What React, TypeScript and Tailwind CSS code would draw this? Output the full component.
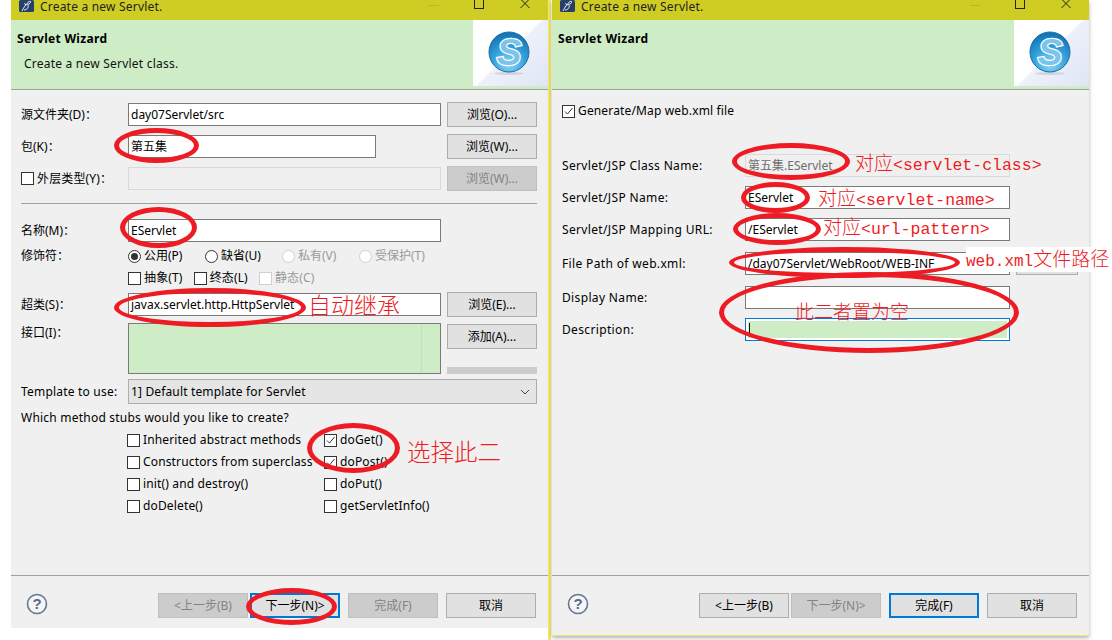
import type { ReactNode } from 'react';

const font = { fontFamily: '"Noto Sans", "Noto Sans CJK SC", sans-serif' };

function Logo() {
  return (
    <div className="w-[75px] h-[66px] bg-[linear-gradient(135deg,#ffffff_48%,#eef1fa_50%,#dfe5f5_100%)] flex items-center justify-start pl-[15px]">
      <svg width="42" height="46" viewBox="0 0 42 46">
        <defs>
          <radialGradient id="ball" cx="50%" cy="80%" r="80%">
            <stop offset="0%" stopColor="#8fd8f5" />
            <stop offset="50%" stopColor="#35a3dc" />
            <stop offset="100%" stopColor="#0f6fb0" />
          </radialGradient>
        </defs>
        <ellipse cx="21" cy="43.5" rx="15" ry="1.5" fill="#cfd3da" />
        <circle cx="21" cy="22" r="20" fill="url(#ball)" stroke="#1a6fa8" />
        <text x="21" y="35" textAnchor="middle" fontSize="37" fontWeight="700" fontStyle="italic" fill="#7cc4ec" stroke="#ffffff" strokeWidth="2.5" paintOrder="stroke" fontFamily="Liberation Sans, sans-serif">S</text>
      </svg>
    </div>
  );
}

function TitleBar() {
  return (
    <div className="h-[20px] bg-[#cfcd24] flex items-start overflow-hidden shrink-0">
      <svg width="15" height="12" viewBox="0 0 15 12" className="ml-[8px] shrink-0">
        <rect width="15" height="12" rx="1.5" fill="#27406b" />
        <path d="M3 11C5 7 7 4 10 1.5C12 0.5 12.5 2.5 10 4C7 5.5 5 4.5 6 3M9 5C10 7 8 10 5 10" fill="none" stroke="#fff" strokeWidth="0.9" />
      </svg>
      <span className="ml-[6px] -mt-px text-[12px] leading-[16px] tracking-[0.2px] text-[#222]">Create a new Servlet.</span>
      <div className="ml-auto mr-[18px] flex items-start">
        <div className="w-[10px] h-px mt-[5px] bg-[#b5b33a]" />
        <div className="w-[10px] h-[9px] ml-[35px] border border-t-0 border-[#222]" />
        <svg width="10" height="9" viewBox="0 0 10 9" className="ml-[36px]">
          <path d="M0.5 -1L9.5 8M9.5 -1L0.5 8" stroke="#222" strokeWidth="1" />
        </svg>
      </div>
    </div>
  );
}

function Header({ subtitle }: { subtitle?: string }) {
  return (
    <div className="h-[70px] bg-[#ceedc7] border-b border-[#a0a0a0] flex shrink-0">
      <div className="flex-1 pl-[6px]">
        <div className="mt-[11px] text-[12px] leading-[16px] tracking-[0.3px] font-bold text-black">Servlet Wizard</div>
        {subtitle && <div className="mt-[9px] ml-[7px] text-[12px] leading-[16px] tracking-[0.22px] text-[#111]">{subtitle}</div>}
      </div>
      <Logo />
    </div>
  );
}

function Input({ value, width, muted, focused, children }: { value?: string; width: string; muted?: boolean; focused?: boolean; children?: ReactNode }) {
  let cls = 'bg-white border-[#7a7a7a] text-black';
  if (muted) cls = 'bg-[#f0f0f0] border-[#d9d9d9] text-[#6d6d6d]';
  if (focused) cls = 'bg-white border-[#0078d7] text-black';
  return (
    <div className={`h-[23px] shrink-0 border px-[2px] flex items-center text-[12px] whitespace-nowrap overflow-hidden ${width} ${cls}`}>
      {value}
      {children}
    </div>
  );
}

function Btn({ label, disabled, focused, width = 'w-[90px]' }: { label: string; disabled?: boolean; focused?: boolean; width?: string }) {
  let cls = 'bg-[#e1e1e1] border border-[#adadad] text-black';
  if (disabled) cls = 'bg-[#cccccc] border border-[#bfbfbf] text-[#838383]';
  if (focused) cls = 'bg-[#e1e1e1] border-2 border-[#0078d7] text-black';
  return <div className={`h-[25px] shrink-0 flex items-center justify-center text-[12px] ${width} ${cls}`}>{label}</div>;
}

function Check({ checked, disabled, label }: { checked?: boolean; disabled?: boolean; label: string }) {
  return (
    <div className={`flex items-center gap-[3px] text-[12px] tracking-[0.15px] whitespace-nowrap ${disabled ? 'text-[#9a9a9a]' : 'text-black'}`}>
      <div className={`w-[13px] h-[13px] shrink-0 bg-white border ${disabled ? 'border-[#d0d0d0]' : 'border-[#333]'}`}>
        {checked && (
          <svg width="11" height="11" viewBox="0 0 11 11">
            <path d="M2 5.5L4.5 8L9.5 2" fill="none" stroke="#333" strokeWidth="1" />
          </svg>
        )}
      </div>
      {label}
    </div>
  );
}

function Radio({ selected, disabled, label }: { selected?: boolean; disabled?: boolean; label: string }) {
  return (
    <div className={`flex items-center gap-[3px] text-[12px] whitespace-nowrap ${disabled ? 'text-[#9a9a9a]' : 'text-black'}`}>
      <div className={`w-[13px] h-[13px] rounded-full bg-white border flex items-center justify-center ${disabled ? 'border-[#d0d0d0]' : 'border-[#333]'}`}>
        {selected && <div className="w-[7px] h-[7px] rounded-full bg-[#333]" />}
      </div>
      {label}
    </div>
  );
}

function Help() {
  return (
    <svg width="22" height="22" viewBox="0 0 22 22">
      <circle cx="11" cy="11" r="9.5" fill="#f4f5f8" stroke="#68758f" strokeWidth="1.6" />
      <text x="11" y="16" textAnchor="middle" fontSize="15" fontWeight="700" fill="#5b6884" fontFamily="Liberation Sans, sans-serif">?</text>
    </svg>
  );
}

function FormRow({ label, className = '', children }: { label: ReactNode; className?: string; children: ReactNode }) {
  return (
    <div className={`flex items-center h-[25px] shrink-0 ${className}`}>
      <div className="w-[107px] shrink-0 text-[12px] text-black whitespace-nowrap">{label}</div>
      {children}
    </div>
  );
}

function LeftWindow() {
  return (
    <div className="w-[537px] h-[628px] shrink-0 ml-[11px] bg-[#f0f0f0] flex flex-col">
      <TitleBar />
      <Header subtitle="Create a new Servlet class." />
      <div className="flex-1 flex flex-col pl-[10px] pr-[11px] pt-[12px]">
        <FormRow label="源文件夹(D)：">
          <Input width="w-[313px]" value="day07Servlet/src" />
          <div className="ml-[6px]"><Btn label="浏览(O)..." /></div>
        </FormRow>
        <FormRow label="包(K)：" className="mt-[7px]">
          <Input width="w-[248px]" value="第五集" />
          <div className="ml-[71px]"><Btn label="浏览(W)..." /></div>
        </FormRow>
        <FormRow label={<Check label="外层类型(Y)：" />} className="mt-[7px]">
          <Input width="w-[313px]" muted />
          <div className="ml-[6px]"><Btn label="浏览(W)..." disabled /></div>
        </FormRow>
        <div className="h-px bg-[#a0a0a0] mt-[12px] shrink-0" />
        <FormRow label="名称(M)：" className="mt-[14px]">
          <Input width="w-[313px]" value="EServlet" />
        </FormRow>
        <div className="flex items-center h-[20px] mt-[3px] shrink-0">
          <div className="w-[107px] text-[12px] text-black">修饰符：</div>
          <div className="w-[77px]"><Radio selected label="公用(P)" /></div>
          <div className="w-[77px]"><Radio label="缺省(U)" /></div>
          <div className="w-[77px]"><Radio disabled label="私有(V)" /></div>
          <Radio disabled label="受保护(T)" />
        </div>
        <div className="flex items-center h-[20px] mt-[2px] pl-[107px] gap-[11px] shrink-0">
          <Check label="抽象(T)" />
          <Check label="终态(L)" />
          <Check disabled label="静态(C)" />
        </div>
        <FormRow label="超类(S)：" className="mt-[4px]">
          <Input width="w-[313px]" value="javax.servlet.http.HttpServlet" />
          <div className="ml-[6px]"><Btn label="浏览(E)..." /></div>
        </FormRow>
        <div className="flex h-[51px] mt-[6px] shrink-0">
          <div className="w-[107px] text-[12px] text-black pt-[1px]">接口(I)：</div>
          <div className="w-[313px] border border-[#7a7a7a] bg-[#ceedc7] flex justify-end">
            <div className="w-[19px] border-l border-[#bfe2b8]" />
          </div>
          <div className="ml-[6px] w-[90px] flex flex-col justify-between">
            <div className="mt-[1px]"><Btn label="添加(A)..." /></div>
            <div className="h-[7px] bg-[#cccccc]" />
          </div>
        </div>
        <div className="flex items-center h-[25px] mt-[5px] shrink-0">
          <div className="w-[107px] text-[12px] tracking-[0.2px] text-black">Template to use:</div>
          <div className="flex-1 h-full border border-[#adadad] bg-[#e5e5e5] flex items-center justify-between pl-[2px] pr-[6px] text-[12px] tracking-[0.15px] text-black">
            1] Default template for Servlet
            <svg width="10" height="6" viewBox="0 0 10 6">
              <path d="M1 1L5 5L9 1" fill="none" stroke="#444" strokeWidth="1" />
            </svg>
          </div>
        </div>
        <div className="h-[20px] mt-[4px] flex items-center text-[12px] tracking-[0.22px] text-black shrink-0">Which method stubs would you like to create?</div>
        <div className="grid grid-cols-[197px_1fr] auto-rows-[22px] items-center pl-[106px] mt-[1px] shrink-0">
          <Check label="Inherited abstract methods" />
          <Check checked label="doGet()" />
          <Check label="Constructors from superclass" />
          <Check checked label="doPost()" />
          <Check label="init() and destroy()" />
          <Check label="doPut()" />
          <Check label="doDelete()" />
          <Check label="getServletInfo()" />
        </div>
      </div>
      <div className="h-[53px] border-t border-[#a0a0a0] flex items-start shrink-0 pt-[17px] pl-[15px] pr-[12px]">
        <Help />
        <div className="ml-auto flex">
          <Btn label="<上一步(B)" disabled />
          <div className="ml-[2px]"><Btn label="下一步(N)>" focused /></div>
          <div className="ml-[8px]"><Btn label="完成(F)" disabled /></div>
          <div className="ml-[8px]"><Btn label="取消" /></div>
        </div>
      </div>
    </div>
  );
}

function RightRow({ label, className = '', children }: { label: string; className?: string; children: ReactNode }) {
  return (
    <div className={`flex items-center shrink-0 ${className}`}>
      <div className="w-[183px] shrink-0 text-[12px] tracking-[0.35px] text-black whitespace-nowrap">{label}</div>
      {children}
    </div>
  );
}

function RightWindow() {
  return (
    <div className="w-[537px] h-[636px] shrink-0 ml-[4px] bg-[#f0f0f0] flex flex-col border-b border-[#f0e868] shadow-[0_2px_4px_rgba(0,0,0,0.3)]">
      <TitleBar />
      <Header />
      <div className="flex-1 flex flex-col pl-[10px] pr-[11px] pt-[12px]">
        <Check checked label="Generate/Map web.xml file" />
        <RightRow label="Servlet/JSP Class Name:" className="mt-[34px]">
          <Input width="w-[265px]" muted value="第五集.EServlet" />
        </RightRow>
        <RightRow label="Servlet/JSP Name:" className="mt-[9px]">
          <Input width="w-[265px]" value="EServlet" />
        </RightRow>
        <RightRow label="Servlet/JSP Mapping URL:" className="mt-[9px]">
          <Input width="w-[265px]" value="/EServlet" />
        </RightRow>
        <RightRow label="File Path of web.xml:" className="mt-[11px]">
          <Input width="w-[265px]" value="/day07Servlet/WebRoot/WEB-INF" />
          <div className="ml-[6px] w-[62px] h-[23px] bg-[#e1e1e1] border border-[#adadad]" />
        </RightRow>
        <RightRow label="Display Name:" className="mt-[11px]">
          <Input width="w-[265px]" />
        </RightRow>
        <RightRow label="Description:" className="mt-[9px]">
          <Input width="w-[265px]" focused>
            <div className="w-full h-[17px] bg-[#ceedc7] flex items-center">
              <div className="w-px h-[14px] ml-px bg-black" />
            </div>
          </Input>
        </RightRow>
      </div>
      <div className="h-[60px] border-t border-[#a0a0a0] flex items-start shrink-0 pt-[17px] pl-[15px] pr-[12px]">
        <Help />
        <div className="ml-auto flex">
          <Btn label="<上一步(B)" />
          <div className="ml-[2px]"><Btn label="下一步(N)>" disabled /></div>
          <div className="ml-[8px]"><Btn label="完成(F)" focused /></div>
          <div className="ml-[8px]"><Btn label="取消" /></div>
        </div>
      </div>
    </div>
  );
}

const ring = 'absolute rounded-[50%] border-[5px] border-[#ed1c24]';
const note = 'absolute font-light text-[#ed1c24] whitespace-nowrap';
const mono = { fontFamily: '"Liberation Mono", monospace' };

function Annotations() {
  return (
    <>
      <div className={`${ring} left-[114px] top-[128px] w-[85px] h-[35px]`} />
      <div className={`${ring} left-[120px] top-[207px] w-[77px] h-[41px]`} />
      <div className={`${ring} left-[114px] top-[288px] w-[192px] h-[39px]`} />
      <div className={`${ring} left-[307px] top-[423px] w-[93px] h-[50px]`} />
      <div className={`${ring} left-[246px] top-[588px] w-[91px] h-[37px]`} />
      <div className={`${ring} left-[732px] top-[143px] w-[118px] h-[37px]`} />
      <div className={`${ring} left-[741px] top-[182px] w-[69px] h-[31px]`} />
      <div className={`${ring} left-[733px] top-[213px] w-[88px] h-[32px]`} />
      <div className={`${ring} left-[729px] top-[247px] w-[231px] h-[31px]`} />
      <div className={`${ring} left-[719px] top-[272px] w-[300px] h-[81px]`} />

      <div className={`${note} left-[308px] top-[290px] text-[23px] leading-[30px]`}>自动继承</div>
      <div className={`${note} left-[407px] top-[437px] text-[23.5px] leading-[30px]`}>选择此二</div>
      <div className={`${note} left-[855px] top-[150px] text-[19px] leading-[26px]`}>
        对应<span className="text-[16.5px]" style={mono}>&lt;servlet-class&gt;</span>
      </div>
      <div className={`${note} left-[818px] top-[185px] text-[19px] leading-[26px]`}>
        对应<span className="text-[16.5px]" style={mono}>&lt;servlet-name&gt;</span>
      </div>
      <div className={`${note} left-[823px] top-[214px] text-[19px] leading-[26px]`}>
        对应<span className="text-[16.5px]" style={mono}>&lt;url-pattern&gt;</span>
      </div>
      <div className={`${note} left-[966px] top-[247px] w-[146px] h-[25px] bg-white text-[19px] leading-[25px]`}>
        <span className="text-[16px]" style={mono}>web.xml</span>文件路径
      </div>
      <div className={`${note} left-[795px] top-[299px] text-[19px] leading-[26px]`}>此二者置为空</div>
    </>
  );
}

export default function App() {
  return (
    <div className="relative w-[1112px] h-[640px] bg-white overflow-hidden flex items-start" style={font}>
      <LeftWindow />
      <div className="w-[3px] h-[640px] shrink-0 -mr-[3px] bg-[#f0e868]" />
      <RightWindow />
      <Annotations />
    </div>
  );
}
